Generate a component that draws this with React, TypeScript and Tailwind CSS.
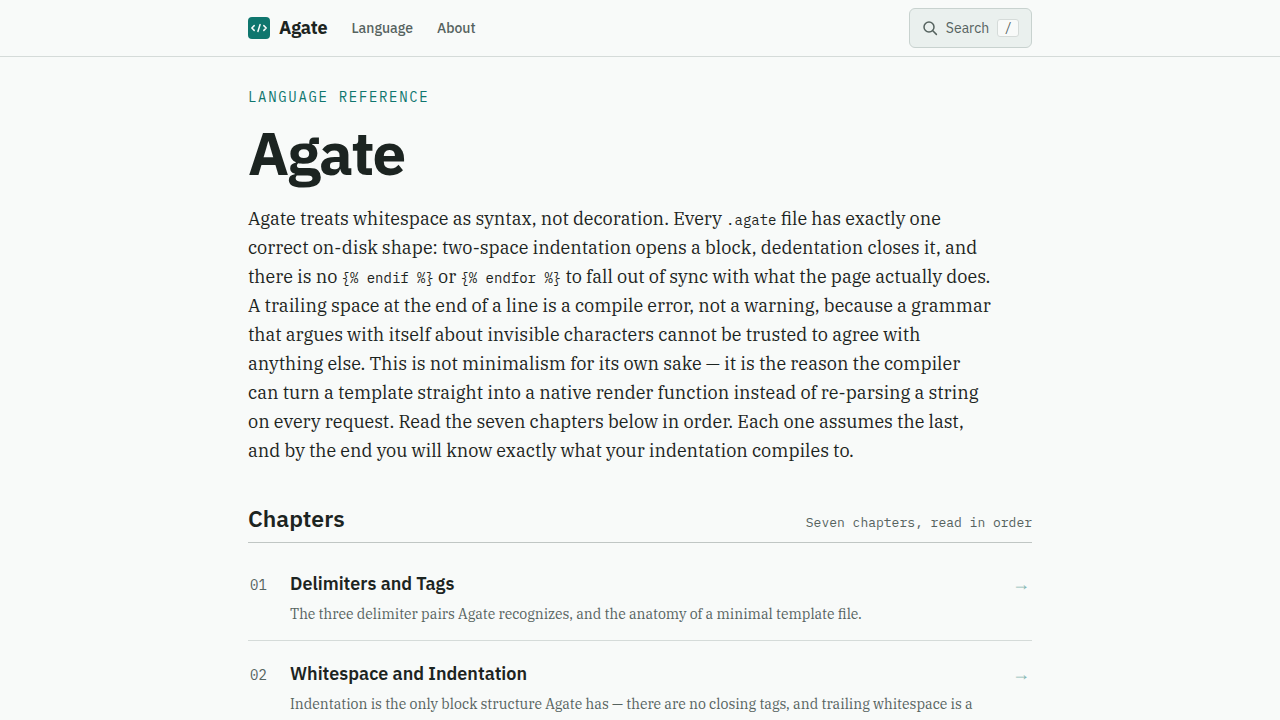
const sans = "font-['IBM_Plex_Sans',Roboto,'Liberation_Sans',sans-serif]";
const serif = "font-['IBM_Plex_Serif','Liberation_Serif',serif]";
const mono = "font-['IBM_Plex_Mono','Liberation_Mono',monospace]";

const chapters = [
  {
    num: "01",
    title: "Delimiters and Tags",
    text: "The three delimiter pairs Agate recognizes, and the anatomy of a minimal template file.",
  },
  {
    num: "02",
    title: "Whitespace and Indentation",
    text: "Indentation is the only block structure Agate has — there are no closing tags, and trailing whitespace is a",
  },
];

function Logo() {
  return (
    <svg width="22" height="22" viewBox="0 0 22 22" fill="none" aria-hidden="true">
      <rect width="22" height="22" rx="4" fill="#0f766e" />
      <g stroke="#f8faf9" strokeWidth="1.5" strokeLinecap="round" strokeLinejoin="round">
        <path d="M6.2 8.6 3.8 11l2.4 2.4" />
        <path d="M15.8 8.6 18.2 11l-2.4 2.4" />
        <path d="M12.1 7.6 9.9 14.4" />
      </g>
    </svg>
  );
}

function SearchIcon() {
  return (
    <svg width="16" height="16" viewBox="0 0 16 16" fill="none" stroke="currentColor" strokeWidth="1.5" strokeLinecap="round" aria-hidden="true">
      <circle cx="7" cy="7" r="5" />
      <path d="m10.8 10.8 3.6 3.6" />
    </svg>
  );
}

function Header() {
  return (
    <header className={`border-b border-[#d5dbd9] ${sans}`}>
      <div className="mx-auto flex h-14 max-w-[784px] items-center justify-between">
        <div className="flex items-center gap-6">
          <a href="#top" className="flex items-center gap-[9px] text-lg font-bold tracking-[-0.01em] text-[#1c2421]">
            <Logo />
            Agate
          </a>
          <nav className="flex gap-6 text-sm font-medium text-[#56635f]">
            <a href="#language">Language</a>
            <a href="#about">About</a>
          </nav>
        </div>
        <button
          type="button"
          className="flex h-10 items-center gap-2 rounded-md border border-[#c8d2cf] bg-[#eaf0ee] px-3 text-sm text-[#56635f]"
        >
          <SearchIcon />
          Search
          <kbd className={`rounded-[3px] border border-[#d5dbd9] bg-[#f8faf9] px-[6px] text-[13px] leading-4 ${mono}`}>
            /
          </kbd>
        </button>
      </div>
    </header>
  );
}

function Code({ children }: { children: string }) {
  return <code className={`text-sm leading-none ${mono}`}>{children}</code>;
}

export default function App() {
  return (
    <div id="top" className="min-h-screen bg-[#f8faf9] text-[#1c2421]">
      <Header />
      <main className="mx-auto max-w-[784px] pt-7">
        <p className={`text-sm leading-6 tracking-[0.12em] text-[#0f766e] uppercase ${mono}`}>Language reference</p>
        <h1 className={`mt-3 text-[60px] leading-16 font-bold tracking-tight ${sans}`}>Agate</h1>
        <p className={`mt-[19px] max-w-[745px] text-lg leading-[29px] ${serif}`}>
          Agate treats whitespace as syntax, not decoration. Every <Code>.agate</Code> file has exactly one correct
          on-disk shape: two-space indentation opens a block, dedentation closes it, and there is no{" "}
          <Code>{"{% endif %}"}</Code> or <Code>{"{% endfor %}"}</Code> to fall out of sync with what the page actually
          does. A trailing space at the end of a line is a compile error, not a warning, because a grammar that argues
          with itself about invisible characters cannot be trusted to agree with anything else. This is not minimalism
          for its own sake — it is the reason the compiler can turn a template straight into a native render function
          instead of re-parsing a string on every request. Read the seven chapters below in order. Each one assumes the
          last, and by the end you will know exactly what your indentation compiles to.
        </p>

        <section className="mt-[37px]">
          <div className="flex items-baseline justify-between border-b border-[#c0c6c4] pb-2">
            <h2 className={`text-[23px] leading-8 font-semibold ${sans}`}>Chapters</h2>
            <span className={`text-[13px] text-[#56635f] ${mono}`}>Seven chapters, read in order</span>
          </div>
          <ol className="pt-2">
            {chapters.map((c) => (
              <li key={c.num} className="border-b border-[#d5dbd9]">
                <a href={`#chapter-${c.num}`} className="flex items-baseline px-[2px] pt-[17px] pb-[14px]">
                  <span className={`w-10 shrink-0 text-sm text-[#56635f] ${mono}`}>{c.num}</span>
                  <div className="flex-1">
                    <h3 className={`text-lg leading-8 font-semibold ${sans}`}>{c.title}</h3>
                    <p className={`mt-[2px] text-sm leading-6 text-[#56635f] ${serif}`}>{c.text}</p>
                  </div>
                  <span className="font-['Liberation_Serif',serif] text-lg text-[#0f766e] opacity-50">→</span>
                </a>
              </li>
            ))}
          </ol>
        </section>
      </main>
    </div>
  );
}
